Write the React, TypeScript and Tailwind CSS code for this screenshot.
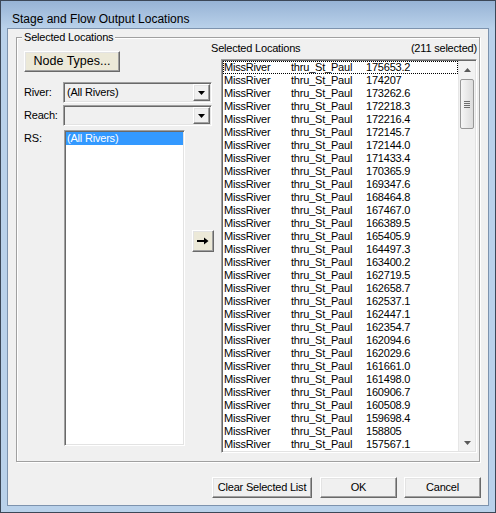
import React from 'react'

const stations = [
  '175653.2', '174207', '173262.6', '172218.3', '172216.4', '172145.7', '172144.0', '171433.4',
  '170365.9', '169347.6', '168464.8', '167467.0', '166389.5', '165405.9', '164497.3', '163400.2',
  '162719.5', '162658.7', '162537.1', '162447.1', '162354.7', '162094.6', '162029.6', '161661.0',
  '161498.0', '160906.7', '160508.9', '159698.4', '158805', '157567.1',
]

// classic 3d borders
const raised =
  'border border-t-white border-l-white border-r-[#696969] border-b-[#696969] shadow-[inset_-1px_-1px_0_#a0a0a0,inset_1px_1px_0_#e3e3e3]'
const sunken =
  'border border-t-[#a0a0a0] border-l-[#a0a0a0] border-r-white border-b-white shadow-[inset_1px_1px_0_#696969,inset_-1px_-1px_0_#e3e3e3]'

const Combo = ({ value }: { value?: string }) => (
  <div className={`flex h-[21px] w-[149px] shrink-0 items-center bg-[#f0f0f0] p-[1px] ${sunken}`}>
    <div className="flex-1 pl-[2px] leading-[13px]">{value}</div>
    <div className={`flex h-full w-[17px] items-center justify-center bg-[#f0f0f0] ${raised}`}>
      <svg width="7" height="4" viewBox="0 0 7 4">
        <path d="M0 0h7L3.5 4z" fill="#000" />
      </svg>
    </div>
  </div>
)

const Button = ({ label, w, beige }: { label: string; w: string; beige?: boolean }) => (
  <div
    className={`flex h-[21px] ${w} shrink-0 items-center justify-center ${beige ? 'bg-[#ece9d8]' : 'bg-[#f0f0f0]'} ${raised}`}
  >
    {label}
  </div>
)

const Arrow = ({ down }: { down?: boolean }) => (
  <div className="flex h-[17px] items-center justify-center">
    <svg width="7" height="4" viewBox="0 0 7 4">
      <path d={down ? 'M0 0h7L3.5 4z' : 'M3.5 0L7 4H0z'} fill="#5a5a5a" />
    </svg>
  </div>
)

const ScrollBar = () => (
  <div className="flex w-[17px] flex-col border-l border-[#e6e6e6] bg-[#f2f2f2]">
    <Arrow />
    <div className="flex-1 pt-[1px]">
      <div className="mx-auto flex h-[50px] w-[14px] flex-col items-center justify-center gap-[1px] rounded-[2px] border border-[#979797] bg-linear-to-r from-[#f6f6f6] to-[#dcdcdc]">
        <div className="h-[1px] w-[6px] bg-[#6e6e6e]" />
        <div className="h-[1px] w-[6px] bg-[#6e6e6e]" />
        <div className="h-[1px] w-[6px] bg-[#6e6e6e]" />
        <div className="h-[1px] w-[6px] bg-[#6e6e6e]" />
      </div>
    </div>
    <Arrow down />
  </div>
)

export default function App() {
  return (
    <div className="flex h-[513px] w-[496px] flex-col border border-[#3c4757] bg-[#b9d1ea] font-['Liberation_Sans',Arial,sans-serif] text-[11px] tracking-[-0.2px] text-black">
      <div className="flex h-[27px] items-center bg-linear-to-b from-[#97b3d5] to-[#b9d1ea] pl-[11px] pt-[9px] text-[12px] tracking-normal">
        Stage and Flow Output Locations
      </div>

      <div className="mx-[6px] mb-[6px] flex flex-1 flex-col border border-[#7d93ae] bg-[#f0f0f0]">
        {/* group box */}
        <div className="relative ml-[8px] mt-[8px] flex h-[425px] w-[464px] border border-[#a0a0a0] shadow-[inset_1px_1px_0_#fff,1px_1px_0_#fff]">
          <div className="absolute left-[5px] top-[-7px] bg-[#f0f0f0] px-[2px] leading-[13px]">
            Selected Locations
          </div>

          <div className="flex w-[194px] shrink-0 flex-col pl-[7px] pt-[13px]">
            <div className="text-[12.5px] tracking-normal">
              <Button label="Node Types..." w="w-[96px]" beige />
            </div>
            <div className="mt-[10px] flex items-center">
              <div className="w-[39px] shrink-0">River:</div>
              <Combo value="(All Rivers)" />
            </div>
            <div className="mt-[2px] flex items-center">
              <div className="w-[39px] shrink-0">Reach:</div>
              <Combo />
            </div>
            <div className="mt-[4px] flex items-start">
              <div className="mt-[2px] w-[40px] shrink-0 leading-[13px]">RS:</div>
              <div className={`h-[316px] w-[121px] shrink-0 bg-white p-[1px] ${sunken}`}>
                <div className="h-[13px] bg-[#3399ff] pl-[1px] leading-[13px] text-white">(All Rivers)</div>
              </div>
              <div className={`ml-[7px] mt-[100px] flex h-[22px] w-[22px] shrink-0 items-center justify-center bg-[#ece9d8] ${raised}`}>
                <svg width="12" height="8" viewBox="0 0 12 8">
                  <path d="M0 3h8v2H0z M7 0.5L11.5 4L7 7.5z" fill="#000" />
                </svg>
              </div>
            </div>
          </div>

          <div className="flex w-[266px] shrink-0 flex-col">
            <div className="mt-[4px] flex h-[13px] items-center justify-between leading-[13px]">
              <span>Selected Locations</span>
              <span>(211 selected)</span>
            </div>
            <div className={`ml-[10px] mt-[4px] flex h-[394px] w-[256px] bg-white p-[1px] ${sunken}`}>
              <div className="flex-1">
                {stations.map((s, i) => (
                  <div
                    key={s}
                    className={`flex h-[13px] items-center pl-[1px] leading-[13px] ${
                      i === 0 ? 'outline-1 -outline-offset-1 outline-black outline-dotted' : ''
                    }`}
                  >
                    <span className="w-[67px] shrink-0">MissRiver</span>
                    <span className="w-[75px] shrink-0">thru_St_Paul</span>
                    <span>{s}</span>
                  </div>
                ))}
              </div>
              <ScrollBar />
            </div>
          </div>
        </div>

        <div className="mt-[15px] flex justify-end pr-[7px]">
          <Button label="Clear Selected List" w="w-[100px]" />
          <div className="ml-[8px]">
            <Button label="OK" w="w-[77px]" />
          </div>
          <div className="ml-[7px]">
            <Button label="Cancel" w="w-[77px]" />
          </div>
        </div>
      </div>
    </div>
  )
}
